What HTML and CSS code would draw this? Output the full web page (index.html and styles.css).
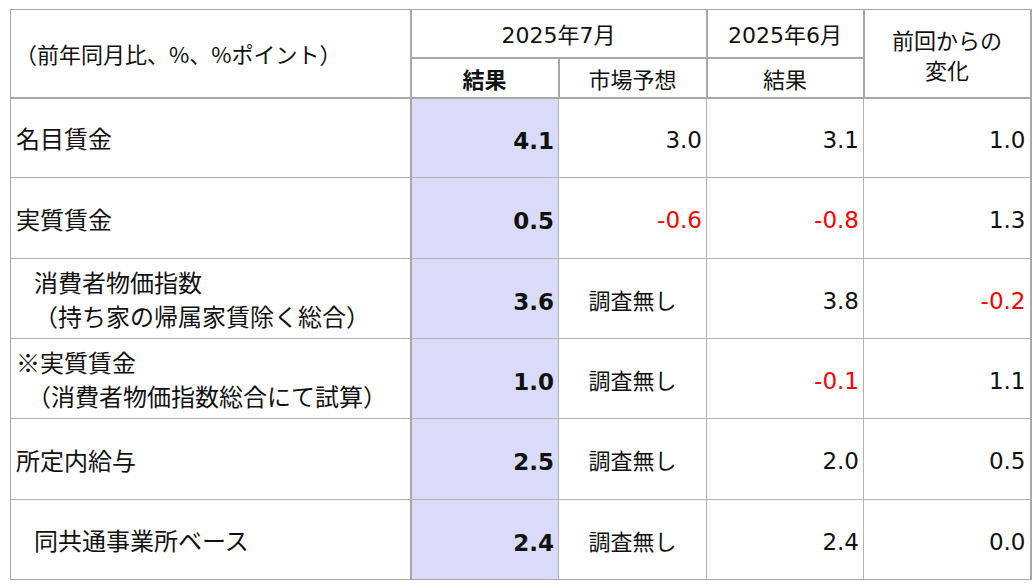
FILE: index.html
```html
<!DOCTYPE html>
<html lang="ja">
<head>
<meta charset="utf-8">
<link rel="stylesheet" href="styles.css">
</head>
<body>
<div class="wrap">
<table class="tbl">
  <colgroup>
    <col class="c-label">
    <col class="c-res">
    <col class="c-fc">
    <col class="c-prev">
    <col class="c-chg">
  </colgroup>
  <thead>
    <tr class="h1">
      <th rowspan="2" class="unit">（前年同月比、%、%ポイント）</th>
      <th colspan="2">2025年7月</th>
      <th>2025年6月</th>
      <th rowspan="2" class="chg">前回からの<br>変化</th>
    </tr>
    <tr class="h2">
      <th class="bold">結果</th>
      <th>市場予想</th>
      <th>結果</th>
    </tr>
  </thead>
  <tbody>
    <tr class="r-a">
      <td class="label">名目賃金</td>
      <td class="res">4.1</td>
      <td class="num">3.0</td>
      <td class="num">3.1</td>
      <td class="num">1.0</td>
    </tr>
    <tr class="r-b">
      <td class="label">実質賃金</td>
      <td class="res">0.5</td>
      <td class="num neg">-0.6</td>
      <td class="num neg">-0.8</td>
      <td class="num">1.3</td>
    </tr>
    <tr class="r-a">
      <td class="label two"><span class="l1 ind">消費者物価指数</span><span class="l2 ind2">（持ち家の帰属家賃除く総合）</span></td>
      <td class="res">3.6</td>
      <td class="na">調査無し</td>
      <td class="num">3.8</td>
      <td class="num neg">-0.2</td>
    </tr>
    <tr class="r-a">
      <td class="label two"><span class="l1">※実質賃金</span><span class="l2 ind3">（消費者物価指数総合にて試算）</span></td>
      <td class="res">1.0</td>
      <td class="na">調査無し</td>
      <td class="num neg">-0.1</td>
      <td class="num">1.1</td>
    </tr>
    <tr class="r-b">
      <td class="label">所定内給与</td>
      <td class="res">2.5</td>
      <td class="na">調査無し</td>
      <td class="num">2.0</td>
      <td class="num">0.5</td>
    </tr>
    <tr class="r-a">
      <td class="label"><span class="ind">同共通事業所ベース</span></td>
      <td class="res">2.4</td>
      <td class="na">調査無し</td>
      <td class="num">2.4</td>
      <td class="num">0.0</td>
    </tr>
  </tbody>
</table>
</div>
</body>
</html>
```

FILE: styles.css
```css
html, body {
  margin: 0;
  padding: 0;
  background: #ffffff;
}

.wrap {
  padding: 9px 0 0 10px;
}

.tbl {
  border-collapse: collapse;
  table-layout: fixed;
  width: 1020px;
  font-family: "DejaVu Sans", "Noto Sans CJK JP", sans-serif;
  color: #111111;
}

.c-label { width: 400px; }
.c-res { width: 148px; }
.c-fc { width: 148px; }
.c-prev { width: 157px; }
.c-chg { width: 167px; }

.tbl th {
  font-weight: normal;
  font-size: 22px;
  border: 2px solid #a8a8a8;
  padding: 0;
  text-align: center;
  vertical-align: middle;
  font-family: "DejaVu Sans", "Noto Sans CJK JP", sans-serif;
}

.tbl th.unit {
  text-align: left;
  padding-left: 4px;
  border-left: 1px solid #a8a8a8;
  border-top: 1px solid #a8a8a8;
  font-family: "Noto Sans CJK JP", sans-serif;
  font-size: 22px;
}

.tbl .h1 th {
  border-top: 1px solid #a8a8a8;
}

.tbl th.chg {
  line-height: 30px;
  padding-top: 2px;
  font-family: "Noto Sans CJK JP", sans-serif;
}

.tbl th.bold {
  font-weight: bold;
  font-family: "Noto Sans CJK JP", sans-serif;
}

.h1 { height: 48px; }
.h2 { height: 40px; }

.tbl tbody tr.r-a { height: 80px; }
.tbl tbody tr.r-b { height: 81px; }

.tbl td {
  border: 1px solid #b2b2b2;
  padding: 0;
  vertical-align: middle;
  font-size: 23px;
}

.tbl td.label {
  border-right: 2px solid #a8a8a8;
  border-left: 1px solid #a8a8a8;
  padding-left: 5px;
  font-family: "Noto Sans CJK JP", sans-serif;
  font-size: 24px;
}

.tbl td.label.two {
  line-height: 34px;
}

.l1, .l2 { display: block; }
.ind { padding-left: 18px; }
.ind2 { padding-left: 18px; }
.ind3 { padding-left: 11px; }

.tbl td.res {
  background: #d9dbf8;
  font-weight: bold;
  text-align: right;
  padding-right: 4px;
  padding-top: 6px;
  font-size: 23px;
}

.tbl td.num {
  text-align: right;
  padding-right: 4px;
  padding-top: 4px;
}

.tbl td.neg { color: #ff0000; }

.tbl td.na {
  text-align: center;
  font-family: "Noto Sans CJK JP", sans-serif;
  font-size: 22px;
}

.tbl tbody tr:last-child td {
  border-bottom: 1px solid #a8a8a8;
}

.tbl tbody td:last-child {
  border-right: 2px solid #a8a8a8;
}
```
